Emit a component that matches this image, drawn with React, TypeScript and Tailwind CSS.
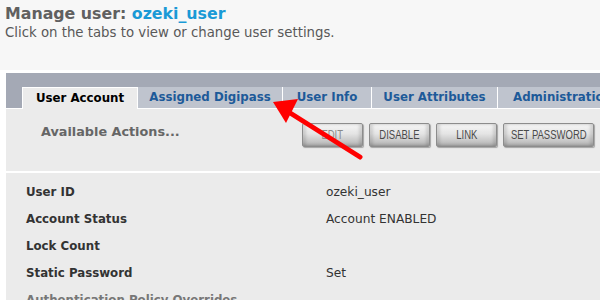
const tabs = [
  { label: "User Account", w: "w-[115px]", active: true },
  { label: "Assigned Digipass", w: "w-[145px]", active: false },
  { label: "User Info", w: "w-[89px]", active: false },
  { label: "User Attributes", w: "w-[126px]", active: false },
  { label: "Administration", w: "w-[130px]", active: false },
];

const actions = [
  { label: "EDIT", w: "w-[61px]", dim: true },
  { label: "DISABLE", w: "w-[61px]", dim: false },
  { label: "LINK", w: "w-[61px]", dim: false },
  { label: "SET PASSWORD", w: "w-[91px]", dim: false },
  { label: "DELETE", w: "w-[61px]", dim: false },
];

const rows = [
  { label: "User ID", value: "ozeki_user" },
  { label: "Account Status", value: "Account ENABLED" },
  { label: "Lock Count", value: "" },
  { label: "Static Password", value: "Set" },
];

function ActionButton({ label, w, dim }: { label: string; w: string; dim: boolean }) {
  return (
    <div
      className={`${w} flex h-[24px] shrink-0 items-center justify-center overflow-hidden rounded-[2px] border border-[#8c8c8c] bg-[linear-gradient(to_bottom,#f6f6f6,#e4e4e4_45%,#c4c4c4_80%,#a8a8a8)] font-['Liberation_Sans',sans-serif] shadow-[1px_1px_1px_rgba(0,0,0,0.3),inset_3px_0_3px_rgba(0,0,0,0.12),inset_-3px_0_3px_rgba(0,0,0,0.12)]`}
    >
      <span
        className={`inline-block scale-x-[0.76] whitespace-nowrap text-[12.5px] ${dim ? "text-[#8a8a8a]" : "text-[#4a4a4a]"}`}
      >
        {label}
      </span>
    </div>
  );
}

export default function App() {
  return (
    <div className="relative h-[300px] w-[600px] overflow-hidden bg-[#f7f7f7] font-['DejaVu_Sans',Verdana,sans-serif]">
      <div className="h-[70px] px-[5px] pt-[3px]">
        <h1 className="text-[15.8px] font-bold leading-[22px] text-[#606060]">
          Manage user: <span className="text-[#1a9ad6]">ozeki_user</span>
        </h1>
        <p className="text-[13.3px] leading-[15px] text-[#595959]">
          Click on the tabs to view or change user settings.
        </p>
      </div>

      <div className="bg-white pl-[6px] pt-[3px]">
        <div className="flex h-[35px] items-end bg-[#a4a9b5] pl-[16px]">
          {tabs.map((t) =>
            t.active ? (
              <div
                key={t.label}
                className={`${t.w} relative -mb-px flex h-[22px] shrink-0 items-center justify-center border-l border-t border-white bg-[#ebebeb] text-[11.8px] font-bold text-black`}
              >
                {t.label}
              </div>
            ) : (
              <div
                key={t.label}
                className={`${t.w} flex h-[21px] shrink-0 items-center justify-center whitespace-nowrap border-l border-white bg-[#bfc4ce] text-[11.8px] font-bold text-[#1d5a99]`}
              >
                {t.label}
              </div>
            )
          )}
        </div>

        <div className="flex h-[63px] border-t border-white bg-[#ebebeb]">
          <div className="w-[296px] shrink-0 pl-[35px] pt-[15px] text-[12.8px] font-bold leading-[16px] text-[#666]">
            Available Actions...
          </div>
          <div className="flex gap-[6px] pt-[14px]">
            {actions.map((a) => (
              <ActionButton key={a.label} label={a.label} w={a.w} dim={a.dim} />
            ))}
          </div>
        </div>

        <div className="h-[2px] bg-white" />

        <div className="h-[140px] bg-[#ebebeb] pl-[20px] pt-[6px]">
          {rows.map((r) => (
            <div key={r.label} className="flex h-[27px] items-center">
              <div className="w-[300px] shrink-0 text-[11.8px] font-bold text-[#333]">{r.label}</div>
              <div className="text-[12.2px] text-[#333]">{r.value}</div>
            </div>
          ))}
          <div className="flex h-[27px] items-center text-[11.8px] font-bold text-[#777]">
            Authentication Policy Overrides
          </div>
        </div>
      </div>

      <svg
        className="absolute left-0 top-0"
        width="600"
        height="300"
        viewBox="0 0 600 300"
      >
        <line x1="360" y1="157" x2="287" y2="111" stroke="#f00" strokeWidth="5" strokeLinecap="round" />
        <polygon points="273,102 298,99 286,123" fill="#f00" />
      </svg>
    </div>
  );
}
